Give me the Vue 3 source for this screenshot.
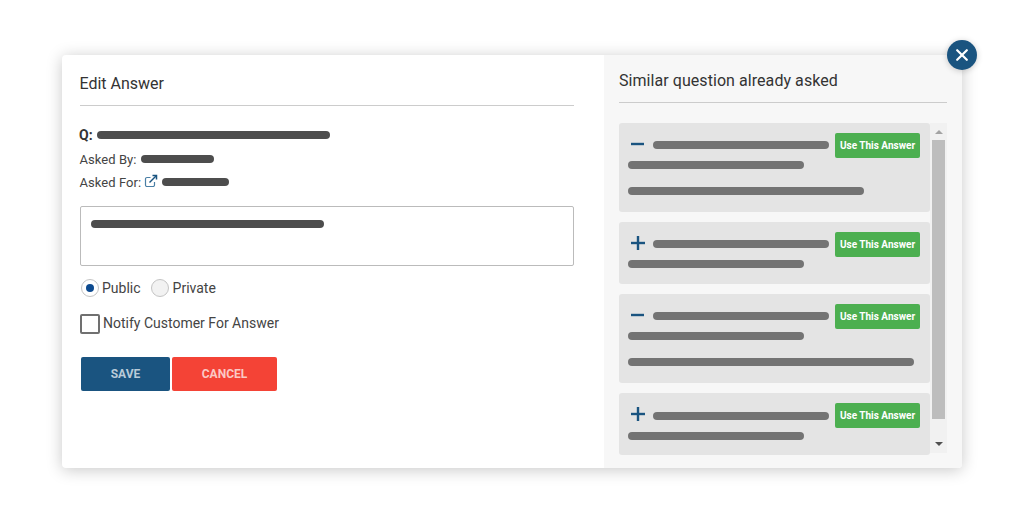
<script setup>
const cards = [
  { open: true, top: 176, lines: [176, 236] },
  { open: false, top: 176, lines: [176] },
  { open: true, top: 176, lines: [176, 286] },
  { open: false, top: 176, lines: [176] },
]
</script>

<template>
  <div class="page">
    <div class="modal">
      <section class="left">
        <h2 class="title">Edit Answer</h2>
        <div class="meta q"><b>Q:</b><i class="bar dark" style="width:233px"></i></div>
        <div class="meta by"><span>Asked By:</span><i class="bar dark" style="width:73px"></i></div>
        <div class="meta for">
          <span>Asked For:</span>
          <svg class="ext" width="14" height="14" viewBox="0 0 14 14" fill="none" stroke="#4a7fa5" stroke-width="1.2">
            <path d="M10.500 8v3a1.500 1.500 0 0 1-1.500 1.500H3A1.500 1.500 0 0 1 1.500 11V5A1.500 1.500 0 0 1 3 3.500h3.500"/>
            <path d="M5.500 8.500 12 2" stroke="#1a5480" stroke-width="1.500"/>
            <path d="M8.500 1.500H12.500V5.500" stroke="#1a5480" stroke-width="1.500"/>
          </svg>
          <i class="bar dark" style="width:67px"></i>
        </div>
        <div class="area"><i class="bar dark" style="width:233px"></i></div>
        <div class="radios">
          <span class="radio on"><span class="dot"></span></span><span class="rlabel">Public</span>
          <span class="radio"></span><span class="rlabel">Private</span>
        </div>
        <div class="check"><span class="box"></span><span class="clabel">Notify Customer For Answer</span></div>
        <div class="actions">
          <button class="btn save">SAVE</button>
          <button class="btn cancel">CANCEL</button>
        </div>
      </section>
      <section class="right">
        <h2 class="rtitle">Similar question already asked</h2>
        <div class="list">
          <div class="cards">
            <div v-for="(c, i) in cards" :key="i" class="card">
              <div class="head">
                <svg class="toggle" width="16" height="16" viewBox="0 0 16 16">
                  <rect x="1" y="6.800" :width="c.open ? 13 : 14" height="2.400" fill="#1a5480"/>
                  <rect v-if="!c.open" x="6.800" y="1" width="2.400" height="14" fill="#1a5480"/>
                </svg>
                <i class="bar grey" :style="{ width: c.top + 'px' }"></i>
                <button class="use">Use This Answer</button>
              </div>
              <i v-for="(w, j) in c.lines" :key="j" class="bar grey line" :class="{ gap: j > 0 }" :style="{ width: w + 'px' }"></i>
            </div>
          </div>
          <div class="scroll">
            <span class="arrow up"></span>
            <span class="thumb"></span>
            <span class="arrow down"></span>
          </div>
        </div>
      </section>
      <button class="close" aria-label="Close">
        <svg width="12" height="12" viewBox="0 0 12 12" stroke="#fff" stroke-width="2.200" stroke-linecap="round">
          <path d="M1.200 1.200 10.800 10.800M10.800 1.200 1.200 10.800"/>
        </svg>
      </button>
    </div>
  </div>
</template>

<style>
html, body { margin: 0; background: #fff; }
</style>

<style scoped>
.page {
  width: 1015px;
  height: 515px;
  box-sizing: border-box;
  padding: 55px 0 0 62px;
  font-family: Roboto, "Liberation Sans", sans-serif;
  color: #333;
  overflow: hidden;
}
.modal {
  position: relative;
  display: flex;
  width: 900px;
  height: 413px;
  background: #fff;
  border-radius: 4px;
  box-shadow: 0 2px 16px rgba(0, 0, 0, 0.22);
}
.left {
  width: 542px;
  box-sizing: border-box;
  padding: 0 30px 0 18px;
}
.right {
  width: 358px;
  box-sizing: border-box;
  padding: 0 15px;
  background: #f7f7f7;
  border-radius: 0 4px 4px 0;
}
.title, .rtitle {
  margin: 0;
  font-size: 16px;
  font-weight: 400;
  line-height: 20px;
  color: #333;
  border-bottom: 1px solid #ccc;
  box-sizing: border-box;
}
.title { padding: 19px 0 12px; height: 51px; text-indent: -0.5px; }
.rtitle { padding: 16px 0 11px; height: 48px; letter-spacing: 0.06px; }
.bar {
  display: block;
  height: 8px;
  border-radius: 4px;
  flex: none;
}
.dark { background: #4d4d4d; }
.grey { background: #737373; }
.meta {
  display: flex;
  align-items: center;
  height: 16px;
  font-size: 13px;
  line-height: 16px;
  color: #444;
}
.meta b { color: #333; font-size: 14px; margin-right: 4px; margin-left: -1px; }
.meta span { margin: 2px 4px 0 -0.5px; letter-spacing: 0.05px; }
.by span { margin-right: 5px; }
.q { margin-top: 21px; }
.by { margin-top: 8px; }
.for { margin-top: 7px; }
.ext { margin: -2px 4px 0 -1px; }
.area {
  margin-top: 16px;
  height: 60px;
  box-sizing: border-box;
  border: 1px solid #bbb;
  border-radius: 2px;
  padding: 13px 10px;
}
.radios {
  display: flex;
  align-items: center;
  margin-top: 13px;
  padding-left: 1px;
  font-size: 14px;
  line-height: 18px;
  color: #444;
}
.radio {
  display: flex;
  align-items: center;
  justify-content: center;
  width: 16px;
  height: 16px;
  border: 1px solid #c4c4c4;
  border-radius: 50%;
  background: #f2f2f2;
}
.radio.on { background: #fff; }
.dot { width: 8px; height: 8px; border-radius: 50%; background: #0d4a8f; }
.rlabel { margin: 0 10px 0 3px; }
.rlabel:last-child { margin-left: 4px; }
.check {
  display: flex;
  align-items: center;
  margin-top: 17px;
  font-size: 14px;
  line-height: 20px;
  color: #444;
}
.clabel { margin-top: -2px; }
.box {
  width: 20px;
  height: 20px;
  box-sizing: border-box;
  border: 2px solid #707070;
  border-radius: 2px;
  margin-right: 3px;
}
.actions { display: flex; gap: 2px; margin-top: 23px; padding-left: 1px; }
.btn {
  height: 34px;
  border: 0;
  border-radius: 2px;
  font: 700 12px Roboto, "Liberation Sans", sans-serif;
  padding: 0;
}
.save { width: 89px; background: #1a5480; color: #b9cbd9; }
.cancel { width: 105px; background: #f44336; color: #fbc9c5; }
.list {
  display: flex;
  margin-top: 20px;
  width: 328px;
  height: 330px;
}
.cards {
  width: 311px;
  height: 332px;
  display: flex;
  flex-direction: column;
  gap: 10px;
  flex: none;
}
.card {
  background: #e4e4e4;
  border-radius: 3px;
  padding: 10px 10px 16px 9px;
}
.head {
  display: flex;
  align-items: center;
  height: 25px;
  margin-bottom: 3px;
}
.toggle { margin: -3px 7px 0 2px; flex: none; }
.head .bar { margin-bottom: 1px; }
.use {
  margin-left: 6px;
  width: 85px;
  height: 25px;
  border: 0;
  padding: 0;
  border-radius: 2px;
  background: #4caf50;
  color: #fff;
  font: 700 10px Roboto, "Liberation Sans", sans-serif;
}
.line.gap { margin-top: 18px; }
.card:nth-child(odd) { padding-bottom: 17px; }
.card:last-child { padding-bottom: 15px; }
.card:last-child .head { margin-bottom: 4px; }
.card:last-child .head .bar { margin: 1px 0 0; }
.scroll {
  width: 17px;
  height: 330px;
  display: flex;
  flex-direction: column;
  align-items: center;
  background: #f1f1f1;
}
.thumb { width: 13px; height: 279px; background: #bdbdbd; flex: none; }
.arrow { width: 0; height: 0; border-left: 4px solid transparent; border-right: 4px solid transparent; flex: none; }
.up { margin: 7px 0 6px; border-bottom: 4px solid #a3a3a3; }
.down { margin-top: 23px; border-top: 4px solid #505050; }
.close {
  position: absolute;
  top: -15px;
  right: -15px;
  width: 30px;
  height: 30px;
  padding: 0;
  border: 0;
  border-radius: 50%;
  background: #1a5480;
  display: flex;
  align-items: center;
  justify-content: center;
  box-shadow: 0 1px 6px rgba(0, 0, 0, 0.2);
}
</style>
